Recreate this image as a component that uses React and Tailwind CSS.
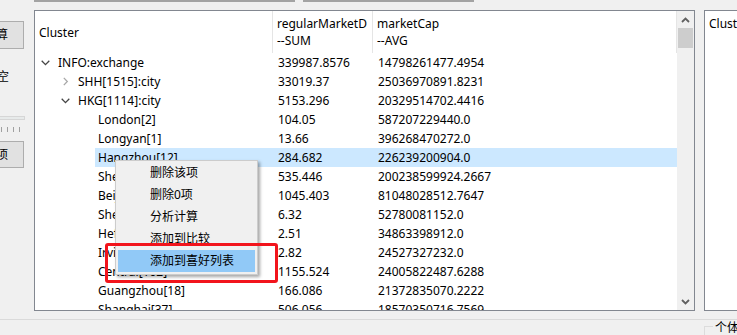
import React from "react";

const rows = [
  { name: "INFO:exchange", lv: 0, exp: "down", a: "339987.8576", b: "14798261477.4954" },
  { name: "SHH[1515]:city", lv: 1, exp: "right", a: "33019.37", b: "25036970891.8231" },
  { name: "HKG[1114]:city", lv: 1, exp: "down", a: "5153.296", b: "20329514702.4416" },
  { name: "London[2]", lv: 2, a: "104.05", b: "587207229440.0" },
  { name: "Longyan[1]", lv: 2, a: "13.66", b: "396268470272.0" },
  { name: "Hangzhou[12]", lv: 2, a: "284.682", b: "226239200904.0", sel: true },
  { name: "Shenzhen[3]", lv: 2, a: "535.446", b: "200238599924.2667" },
  { name: "Beijing[17]", lv: 2, a: "1045.403", b: "81048028512.7647" },
  { name: "Shenyang[1]", lv: 2, a: "6.32", b: "52780081152.0" },
  { name: "Hefei[1]", lv: 2, a: "2.51", b: "34863398912.0" },
  { name: "Irvine[1]", lv: 2, a: "2.82", b: "24527327232.0" },
  { name: "Central[102]", lv: 2, a: "1155.524", b: "24005822487.6288" },
  { name: "Guangzhou[18]", lv: 2, a: "166.086", b: "21372835070.2222" },
  { name: "Shanghai[37]", lv: 2, a: "506.056", b: "18570350716.7569" },
];

const spacerW = { 0: "w-[20px]", 1: "w-[40px]", 2: "w-[60px]" };
const cellW = { 0: "w-[218px]", 1: "w-[198px]", 2: "w-[178px]" };

function Chevron({ dir }) {
  if (dir === "down")
    return (
      <svg width="9" height="6" viewBox="0 0 9 6" className="block">
        <path d="M0.7 0.8 L4.5 4.6 L8.3 0.8" fill="none" stroke="#454545" strokeWidth="1.3" />
      </svg>
    );
  return (
    <svg width="9" height="9" viewBox="0 0 9 9" className="block">
      <path d="M2.8 0.9 L6.3 4.5 L2.8 8.1" fill="none" stroke="#a8a8a8" strokeWidth="1.3" />
    </svg>
  );
}

function Row({ r }) {
  return (
    <div className="flex h-[19px] shrink-0 leading-[19px]">
      <div className={`${spacerW[r.lv]} flex shrink-0 items-center justify-end pr-[5px]`}>
        {r.exp ? <Chevron dir={r.exp} /> : null}
      </div>
      <div className={`flex flex-1 ${r.sel ? "bg-[#cce8ff]" : ""}`}>
        <div className={`${cellW[r.lv]} shrink-0 whitespace-nowrap pl-[3px]`}>{r.name}</div>
        <div className="w-[100px] shrink-0 whitespace-nowrap pl-[5px]">{r.a}</div>
        <div className="flex-1 whitespace-nowrap pl-[5px]">{r.b}</div>
      </div>
    </div>
  );
}

function WinButton({ text, h }) {
  return (
    <div
      className={`${h} flex w-[24px] items-center justify-end overflow-hidden border border-l-0 border-[#adadad] bg-[#e1e1e1] pr-[15px]`}
    >
      <span className="whitespace-nowrap">{text}</span>
    </div>
  );
}

export default function App() {
  return (
    <div className="relative h-[335px] w-[737px] overflow-hidden bg-[#f0f0f0] font-['Noto_Sans','Noto_Sans_CJK_SC',sans-serif] text-[12px] text-black">
      {/* top strip */}
      <div className="flex h-[10px]">
        <div className="ml-[34px] h-[2px] w-[261px] bg-[#a3a3a3]" />
        <div className="ml-[8px] h-[2px] w-[171px] bg-[#a3a3a3]" />
      </div>

      {/* main */}
      <div className="flex h-[301px]">
        {/* left strip */}
        <div className="flex w-[34px] shrink-0 flex-col">
          <div className="mt-[11px]">
            <WinButton text="计算" h="h-[28px]" />
          </div>
          <div className="mt-[21px] flex h-[14px] w-[24px] items-center justify-end overflow-hidden pr-[15px] leading-[14px]">
            <span className="whitespace-nowrap">清空</span>
          </div>
          <div className="mt-[32px] h-[4px] w-[25px] border border-l-0 border-[#d6d6d6] bg-[#e7eaea]" />
          <div className="mt-[7px] flex h-[5px] w-[24px] gap-[5px] pl-[1px]">
            <div className="h-full w-px bg-[#a0a0a0]" />
            <div className="h-full w-px bg-[#a0a0a0]" />
            <div className="h-full w-px bg-[#a0a0a0]" />
            <div className="h-full w-px bg-[#a0a0a0]" />
          </div>
          <div className="mt-[9px]">
            <WinButton text="删除项" h="h-[27px]" />
          </div>
        </div>

        {/* tree panel */}
        <div className="flex h-[301px] w-[661px] shrink-0 border border-[#828790] bg-white">
          <div className="flex w-[642px] shrink-0 flex-col overflow-hidden">
            {/* header */}
            <div className="flex h-[42px] shrink-0 leading-[17px]">
              <div className="flex w-[238px] shrink-0 items-center border-r border-[#e5e5e5] pl-[4px]">Cluster</div>
              <div className="flex w-[100px] shrink-0 flex-col justify-center overflow-hidden whitespace-nowrap border-r border-[#e5e5e5] pl-[4px]">
                <span>regularMarketD</span>
                <span>--SUM</span>
              </div>
              <div className="flex flex-1 flex-col justify-center border-r border-[#e5e5e5] pl-[4px]">
                <span>marketCap</span>
                <span>--AVG</span>
              </div>
            </div>
            {rows.map((r, i) => (
              <Row key={i} r={r} />
            ))}
          </div>
          {/* scrollbar */}
          <div className="flex w-[17px] shrink-0 flex-col bg-[#f0f0f0]">
            <div className="flex h-[17px] shrink-0 items-center justify-center">
              <svg width="9" height="6" viewBox="0 0 9 6">
                <path d="M1 5 L4.5 1.5 L8 5" fill="none" stroke="#606060" strokeWidth="1.8" />
              </svg>
            </div>
            <div className="mx-[1px] h-[20px] shrink-0 bg-[#cdcdcd]" />
            <div className="flex-1" />
            <div className="flex h-[17px] shrink-0 items-center justify-center">
              <svg width="9" height="6" viewBox="0 0 9 6">
                <path d="M1 1 L4.5 4.5 L8 1" fill="none" stroke="#606060" strokeWidth="1.8" />
              </svg>
            </div>
          </div>
        </div>

        {/* right panel */}
        <div className="ml-[9px] h-[301px] flex-1 border-y border-l border-[#828790] bg-white pl-[4px] pt-[3px] leading-[19px]">
          <span className="whitespace-nowrap">Cluster</span>
        </div>
      </div>

      {/* bottom */}
      <div className="mt-[8px] h-px w-full bg-[#dadada]" />
      <div className="flex justify-end">
        <div className="flex w-[33px] shrink-0 items-start">
          <div className="mt-[6px] h-[10px] w-[9px] shrink-0 border-l border-t border-[#dcdcdc]" />
          <span className="ml-[2px] whitespace-nowrap leading-[15px]">个体</span>
        </div>
      </div>

      {/* context menu */}
      <div className="absolute left-[115px] top-[160px] h-[115px] w-[143px] border border-[#cccccc] bg-[#f0f0f0] pt-[1px] shadow-[2px_2px_3px_rgba(0,0,0,0.35)]">
        {["删除该项", "删除0项", "分析计算", "添加到比较", "添加到喜好列表"].map((t, i) => (
          <div
            key={i}
            className={`mx-[2px] flex h-[22px] items-center pl-[32px] ${i === 4 ? "bg-[#91c9f7]" : ""}`}
          >
            {t}
          </div>
        ))}
      </div>

      {/* annotation */}
      <div className="absolute left-[105px] top-[243px] h-[40px] w-[173px] rounded-[3px] border-[3px] border-[#f2141c]" />
    </div>
  );
}
